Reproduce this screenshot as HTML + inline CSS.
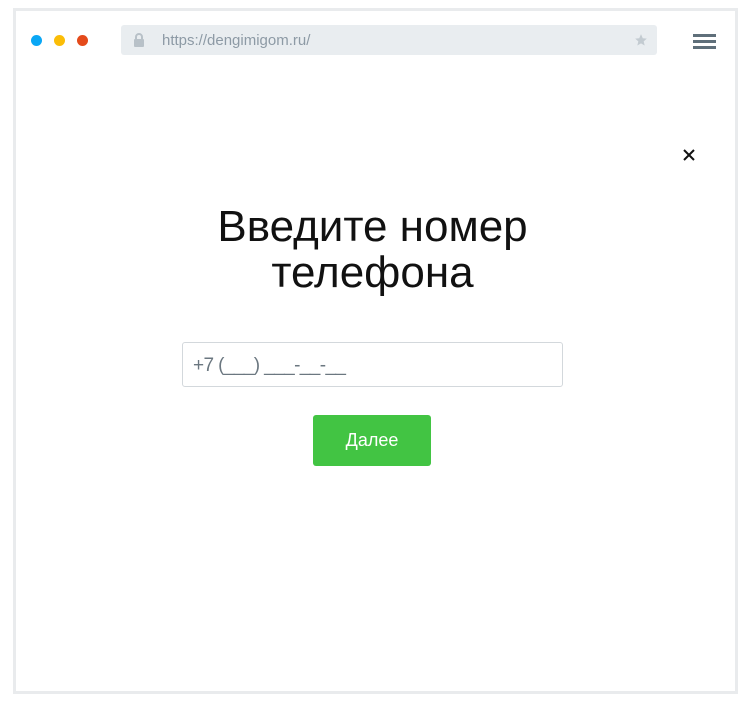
<!DOCTYPE html>
<html><head><meta charset="utf-8"><style>
body{margin:0;width:751px;height:709px;background:#fff;position:relative;font-family:"Liberation Sans","DejaVu Sans",sans-serif;overflow:hidden}
.frame{position:absolute;left:13px;top:8px;width:719px;height:680px;border:3px solid #e9ebed;}
.dot{position:absolute;top:35px;width:11px;height:11px;border-radius:50%}
.url{position:absolute;left:121px;top:25px;width:536px;height:30px;background:#e9edf0;border-radius:3px}
.url span{position:absolute;left:41px;top:7px;font-size:15px;color:#8d9aa5}
.burger{position:absolute;left:693px;width:23px;height:3px;background:#5f6f7a}
h1{position:absolute;left:0;width:745px;top:204px;margin:0;text-align:center;font-weight:normal;font-size:44px;line-height:46px;color:#111;font-family:"Liberation Sans",sans-serif}
.inp{position:absolute;left:182px;top:342px;width:379px;height:43px;border:1px solid #d3d8dc;border-radius:3px;box-sizing:content-box}
.inp span{position:absolute;left:10px;top:12px;font-size:19px;color:#6b7780;letter-spacing:-0.6px}
.btn{position:absolute;left:313px;top:415px;width:118px;height:51px;background:#42c443;border-radius:3px;color:#fff;font-size:18px;text-align:center;line-height:51px}
</style></head><body>
<div class="frame"></div>
<div class="dot" style="left:31px;background:#0aa7f5"></div>
<div class="dot" style="left:54px;background:#fbbd07"></div>
<div class="dot" style="left:77px;background:#e44a1a"></div>
<div class="url">
<svg style="position:absolute;left:12px;top:8px" width="12" height="14" viewBox="0 0 12 14"><rect x="1" y="6" width="10" height="8" rx="1" fill="#b8c1c8"/><path d="M3 6V4a3 3 0 0 1 6 0v2" stroke="#b8c1c8" stroke-width="2" fill="none"/></svg>
<span>https://dengimigom.ru/</span>
<svg style="position:absolute;left:513px;top:8px" width="14" height="14" viewBox="0 0 24 24"><path d="M12 2l3 7 7 .6-5.4 4.7 1.7 7.2L12 17.8 5.7 21.5l1.7-7.2L2 9.6 9 9z" fill="#c3cbd1"/></svg>
</div>
<div class="burger" style="top:34px"></div><div class="burger" style="top:40px"></div><div class="burger" style="top:46px"></div>
<svg style="position:absolute;left:683px;top:149px" width="12" height="12" viewBox="0 0 12 12"><path d="M1 1L11 11M11 1L1 11" stroke="#111" stroke-width="2"/></svg>
<h1>Введите номер<br>телефона</h1>
<div class="inp"><span>+7 (___) ___-__-__</span></div>
<div class="btn">Далее</div>
</body></html>
